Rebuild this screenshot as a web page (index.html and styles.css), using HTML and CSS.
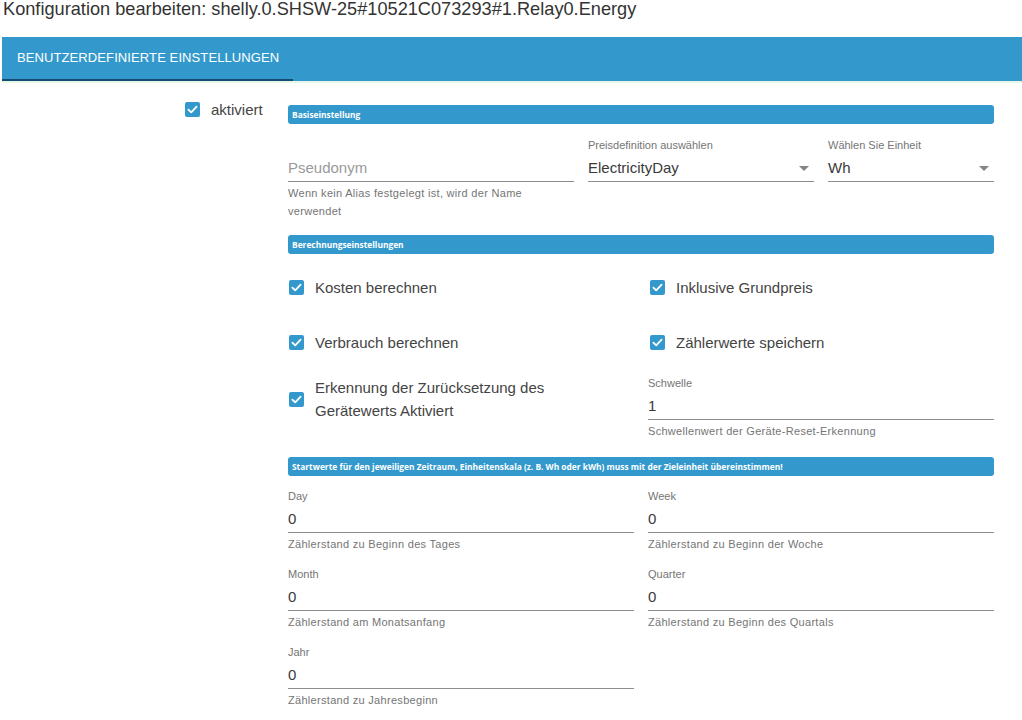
FILE: index.html
```html
<!DOCTYPE html>
<html lang="de">
<head>
<meta charset="utf-8">
<title>Konfiguration bearbeiten</title>
<link rel="stylesheet" href="styles.css">
</head>
<body>
<div class="title">Konfiguration bearbeiten: shelly.0.SHSW-25#10521C073293#1.Relay0.Energy</div>
<div class="tabbar">
  <div class="tab active">BENUTZERDEFINIERTE EINSTELLUNGEN</div>
</div>
<div class="content">
  <div class="side">
    <label class="cb cb-side">
      <span class="box"><svg viewBox="0 0 15 15" width="15" height="15"><rect x="0" y="0" width="15" height="15" rx="2" fill="#3399cc"/><polyline points="3.4,7.6 6.2,10.4 11.6,4.6" fill="none" stroke="#fff" stroke-width="1.8" stroke-linecap="round" stroke-linejoin="round"/></svg></span>
      <span class="cb-text">aktiviert</span>
    </label>
  </div>
  <div class="panel">
    <div class="header">Basiseinstellung</div>
    <div class="grid3">
      <div class="field">
        <div class="flabel"></div>
        <div class="finput placeholder">Pseudonym</div>
        <div class="fhelp">Wenn kein Alias festgelegt ist, wird der Name verwendet</div>
      </div>
      <div class="field">
        <div class="flabel">Preisdefinition auswählen</div>
        <div class="finput select">ElectricityDay<span class="arrow"></span></div>
      </div>
      <div class="field">
        <div class="flabel">Wählen Sie Einheit</div>
        <div class="finput select">Wh<span class="arrow"></span></div>
      </div>
    </div>

    <div class="header h-calc">Berechnungseinstellungen</div>
    <div class="grid2 checks">
      <label class="cb row-cb">
        <span class="box"><svg viewBox="0 0 15 15" width="15" height="15"><rect x="0" y="0" width="15" height="15" rx="2" fill="#3399cc"/><polyline points="3.4,7.6 6.2,10.4 11.6,4.6" fill="none" stroke="#fff" stroke-width="1.8" stroke-linecap="round" stroke-linejoin="round"/></svg></span>
        <span class="cb-text">Kosten berechnen</span>
      </label>
      <label class="cb row-cb">
        <span class="box"><svg viewBox="0 0 15 15" width="15" height="15"><rect x="0" y="0" width="15" height="15" rx="2" fill="#3399cc"/><polyline points="3.4,7.6 6.2,10.4 11.6,4.6" fill="none" stroke="#fff" stroke-width="1.8" stroke-linecap="round" stroke-linejoin="round"/></svg></span>
        <span class="cb-text">Inklusive Grundpreis</span>
      </label>
      <label class="cb row-cb">
        <span class="box"><svg viewBox="0 0 15 15" width="15" height="15"><rect x="0" y="0" width="15" height="15" rx="2" fill="#3399cc"/><polyline points="3.4,7.6 6.2,10.4 11.6,4.6" fill="none" stroke="#fff" stroke-width="1.8" stroke-linecap="round" stroke-linejoin="round"/></svg></span>
        <span class="cb-text">Verbrauch berechnen</span>
      </label>
      <label class="cb row-cb">
        <span class="box"><svg viewBox="0 0 15 15" width="15" height="15"><rect x="0" y="0" width="15" height="15" rx="2" fill="#3399cc"/><polyline points="3.4,7.6 6.2,10.4 11.6,4.6" fill="none" stroke="#fff" stroke-width="1.8" stroke-linecap="round" stroke-linejoin="round"/></svg></span>
        <span class="cb-text">Zählerwerte speichern</span>
      </label>
      <label class="cb multi-cb">
        <span class="box"><svg viewBox="0 0 15 15" width="15" height="15"><rect x="0" y="0" width="15" height="15" rx="2" fill="#3399cc"/><polyline points="3.4,7.6 6.2,10.4 11.6,4.6" fill="none" stroke="#fff" stroke-width="1.8" stroke-linecap="round" stroke-linejoin="round"/></svg></span>
        <span class="cb-text">Erkennung der Zurücksetzung des Gerätewerts Aktiviert</span>
      </label>
      <div class="field">
        <div class="flabel">Schwelle</div>
        <div class="finput">1</div>
        <div class="fhelp">Schwellenwert der Geräte-Reset-Erkennung</div>
      </div>
    </div>

    <div class="header h-start">Startwerte für den jeweiligen Zeitraum, Einheitenskala (z. B. Wh oder kWh) muss mit der Zieleinheit übereinstimmen!</div>
    <div class="grid2 values">
      <div class="field">
        <div class="flabel">Day</div>
        <div class="finput">0</div>
        <div class="fhelp">Zählerstand zu Beginn des Tages</div>
      </div>
      <div class="field">
        <div class="flabel">Week</div>
        <div class="finput">0</div>
        <div class="fhelp">Zählerstand zu Beginn der Woche</div>
      </div>
      <div class="field">
        <div class="flabel">Month</div>
        <div class="finput">0</div>
        <div class="fhelp">Zählerstand am Monatsanfang</div>
      </div>
      <div class="field">
        <div class="flabel">Quarter</div>
        <div class="finput">0</div>
        <div class="fhelp">Zählerstand zu Beginn des Quartals</div>
      </div>
      <div class="field">
        <div class="flabel">Jahr</div>
        <div class="finput">0</div>
        <div class="fhelp">Zählerstand zu Jahresbeginn</div>
      </div>
    </div>
  </div>
</div>
</body>
</html>
```

FILE: styles.css
```css
* { box-sizing: border-box; }

html, body {
  margin: 0;
  padding: 0;
  background: #ffffff;
  font-family: "Liberation Sans", Arial, sans-serif;
  color: #333333;
}

.title {
  height: 37px;
  padding-left: 3px;
  font-size: 18.2px;
  line-height: 18px;
  color: #333333;
  white-space: nowrap;
}

.tabbar {
  margin-left: 2px;
  height: 44px;
  background: #3399cc;
  display: flex;
  box-shadow: 0 2px 0 #e4f8ea;
}

.tab {
  width: 291px;
  height: 44px;
  padding-left: 15px;
  line-height: 42px;
  font-size: 13px;
  font-weight: 500;
  color: #ffffff;
  letter-spacing: 0.1px;
}

.tab.active {
  border-bottom: 2px solid #164a72;
}

.content {
  display: flex;
  align-items: flex-start;
}

.side {
  width: 288px;
  padding-left: 185px;
  padding-top: 21px;
}

.cb {
  display: flex;
  align-items: center;
  gap: 11px;
  font-size: 15px;
  color: #444444;
}

.box {
  width: 15px;
  height: 15px;
  flex: none;
  display: block;
}

.box svg { display: block; }

.cb-side { height: 15px; }

.panel {
  width: 706px;
  padding-top: 24px;
}

.header {
  height: 19px;
  line-height: 19px;
  border-radius: 3px;
  background: #3399cc;
  color: #ffffff;
  font-family: "Open Sans", sans-serif;
  font-weight: 700;
  font-size: 8.4px;
  padding-left: 4px;
  white-space: nowrap;
  overflow: hidden;
}

.grid3 {
  margin-top: 14px;
  display: grid;
  grid-template-columns: 286px 226px 166px;
  column-gap: 14px;
}

.grid2 {
  display: grid;
  grid-template-columns: 346px 346px;
  column-gap: 14px;
}

.field { min-width: 0; }

.flabel {
  height: 14px;
  font-size: 11px;
  line-height: 14px;
  color: #757575;
}

.finput {
  position: relative;
  height: 30px;
  padding-top: 5px;
  line-height: 22px;
  font-size: 15px;
  color: #3a3a3a;
  border-bottom: 1px solid #8d8d8d;
}

.finput.placeholder { color: #9a9a9a; }

.arrow {
  position: absolute;
  right: 5px;
  top: 14px;
  width: 0;
  height: 0;
  border-left: 5px solid transparent;
  border-right: 5px solid transparent;
  border-top: 5px solid #858585;
}

.fhelp {
  margin-top: 2px;
  font-size: 11px;
  line-height: 18px;
  letter-spacing: 0.3px;
  color: #757575;
}

.h-calc { margin-top: 15px; }

.checks {
  margin-top: 12px;
  row-gap: 13px;
}

.row-cb {
  height: 42px;
  padding-left: 1px;
}

.checks .row-cb:nth-child(even) { padding-left: 2px; gap: 11px; }

.multi-cb {
  padding-left: 1px;
  align-self: start;
}

.multi-cb .cb-text {
  line-height: 23px;
  width: 250px;
}

.h-start { margin-top: 17px; }

.values {
  margin-top: 13px;
  row-gap: 14px;
}
```
